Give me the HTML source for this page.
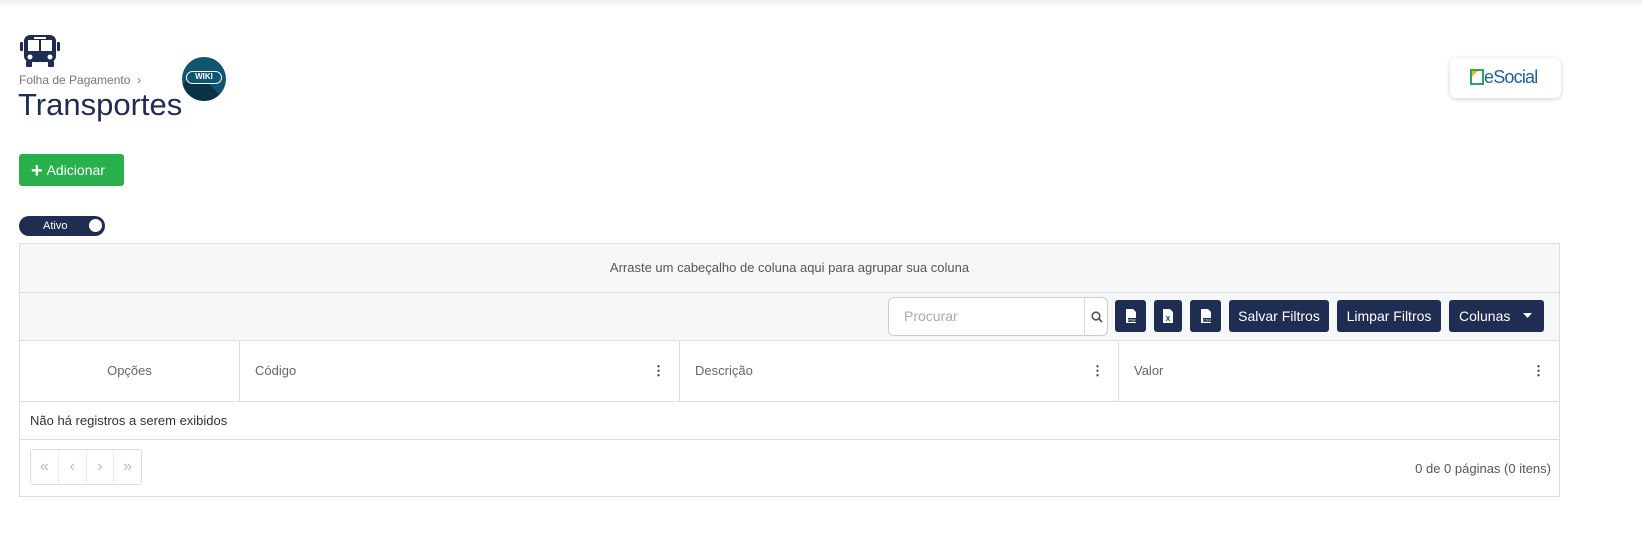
<!DOCTYPE html>
<html><head><style>
*{box-sizing:border-box;margin:0;padding:0}
body{width:1642px;height:537px;background:#fff;font-family:"Liberation Sans",sans-serif;position:relative;overflow:hidden;color:#333}
.abs{position:absolute}
.btn{position:absolute;background:#1f2d52;border-radius:3px;color:#fff;font-size:14px;display:flex;align-items:center;justify-content:center}
</style></head><body>
<div class="abs" style="left:0;top:0;width:1642px;height:8px;background:linear-gradient(#eee,#fff)"></div>
<svg class="abs" style="left:20px;top:34px" width="40" height="34" viewBox="0 0 40 34">
<rect x="4" y="1" width="32" height="27" rx="6" fill="#1f2d52"/>
<rect x="0" y="8" width="3" height="9" rx="1" fill="#1f2d52"/><rect x="37" y="8" width="3" height="9" rx="1" fill="#1f2d52"/>
<rect x="8" y="6" width="11" height="11" fill="#fff"/><rect x="21" y="6" width="11" height="11" fill="#fff"/>
<rect x="14" y="3" width="12" height="2" fill="#fff"/>
<circle cx="10" cy="23" r="2.5" fill="#fff"/><circle cx="30" cy="23" r="2.5" fill="#fff"/>
<rect x="6" y="27" width="6" height="6" rx="1" fill="#1f2d52"/><rect x="28" y="27" width="6" height="6" rx="1" fill="#1f2d52"/>
</svg>
<div class="abs" style="left:19px;top:73px;font-size:12px;color:#777">Folha de Pagamento&nbsp;&nbsp;›</div>
<div class="abs" style="left:18px;top:87px;font-size:31px;color:#1f2d52">Transportes</div>
<div class="abs" style="left:182px;top:57px;width:44px;height:44px;border-radius:50%;background:#0f5570;overflow:hidden">
<div style="position:absolute;left:14px;top:14px;width:60px;height:60px;background:#0b3346;transform:rotate(45deg);transform-origin:0 0"></div>
<div style="position:absolute;left:4px;top:14px;width:36px;height:13px;border:1.5px solid #fff;border-radius:7px;color:#fff;font-size:8px;font-weight:bold;text-align:center;line-height:10px;background:#0f5570">WIKI</div></div>
<div class="abs" style="left:1450px;top:58px;width:111px;height:40px;border-radius:6px;box-shadow:0 1px 5px rgba(0,0,0,.2);background:#fff;font-size:18px;color:#1f5fa0;padding:9px 0 0 20px">
<span style="display:inline-block;width:14px;height:16px;border:2px solid #2aa55a;vertical-align:-2px;background:linear-gradient(135deg,#f6b800 25%,#fff 25%)"></span><span style="letter-spacing:-0.8px">eSocial</span></div>
<div class="abs" style="left:19px;top:154px;width:105px;height:32px;background:#28b04b;border-radius:3px;color:#fff;font-size:14px;line-height:32px;padding-left:12px"><b style="font-size:20px;vertical-align:-2px">+</b>&nbsp;Adicionar</div>
<div class="abs" style="left:19px;top:216px;width:86px;height:20px;background:#1f2d52;border-radius:10px;color:#fff;font-size:11px;line-height:20px;padding-left:24px">Ativo<span style="position:absolute;right:3px;top:3px;width:13px;height:13px;border-radius:50%;background:#fff"></span></div>
<div class="abs" style="left:19px;top:243px;width:1541px;height:254px;border:1px solid #ddd">
<div style="height:49px;background:#f6f7f9;border-bottom:1px solid #ddd;text-align:center;line-height:48px;font-size:13px;color:#555">Arraste um cabeçalho de coluna aqui para agrupar sua coluna</div>
<div style="height:48px;background:#f6f7f9;border-bottom:1px solid #ddd;position:relative"></div>
<div style="height:61px;border-bottom:1px solid #ddd;display:flex;font-size:13px;color:#666">
<div style="width:220px;border-right:1px solid #ddd;text-align:center;line-height:60px">Opções</div>
<div style="width:440px;border-right:1px solid #ddd;line-height:60px;padding-left:15px;position:relative">Código<b style="position:absolute;right:14px;color:#333">⋮</b></div>
<div style="width:439px;border-right:1px solid #ddd;line-height:60px;padding-left:15px;position:relative">Descrição<b style="position:absolute;right:14px;color:#333">⋮</b></div>
<div style="flex:1;line-height:60px;padding-left:15px;position:relative">Valor<b style="position:absolute;right:14px;color:#333">⋮</b></div>
</div>
<div style="height:38px;border-bottom:1px solid #ddd;line-height:38px;padding-left:10px;font-size:13px;color:#333">Não há registros a serem exibidos</div>
<div style="position:absolute;left:10px;top:205px;width:112px;height:36px;border:1px solid #ddd;border-radius:3px;display:flex;color:#bbb;font-size:16px">
<span style="flex:1;text-align:center;line-height:34px;border-right:1px solid #eee">«</span><span style="flex:1;text-align:center;line-height:34px;border-right:1px solid #eee">‹</span><span style="flex:1;text-align:center;line-height:34px;border-right:1px solid #eee">›</span><span style="flex:1;text-align:center;line-height:34px">»</span></div>
<div style="position:absolute;right:8px;top:217px;font-size:13px;color:#555">0 de 0 páginas (0 itens)</div>
</div>
<div class="abs" style="left:888px;top:297px;width:220px;height:39px;border:1px solid #ccc;border-radius:6px;background:#fff;font-size:14px;color:#aaa;line-height:37px;padding-left:15px">Procurar<span style="position:absolute;left:195px;top:0;height:37px;border-left:1px solid #ddd;width:24px"><svg style="position:absolute;left:6px;top:13px" width="12" height="12" viewBox="0 0 12 12"><circle cx="5" cy="5" r="3.8" fill="none" stroke="#555" stroke-width="1.6"/><path d="M8 8l3 3" stroke="#555" stroke-width="1.8"/></svg></span></div>
<div class="btn" style="left:1115px;top:300px;width:31px;height:32px"><svg width="12" height="16" viewBox="0 0 12 16"><path d="M1 1h7l3 3v11H1z" fill="#fff"/><rect x="3" y="10" width="8" height="4" fill="#1f2d52"/><text x="7" y="13.5" font-size="4" fill="#fff" text-anchor="middle" font-family="Liberation Sans">PDF</text></svg></div>
<div class="btn" style="left:1154px;top:300px;width:28px;height:32px"><svg width="12" height="16" viewBox="0 0 12 16"><path d="M1 1h7l3 3v11H1z" fill="#fff"/><text x="6" y="13" font-size="7" font-weight="bold" fill="#1f2d52" text-anchor="middle" font-family="Liberation Sans">X</text></svg></div>
<div class="btn" style="left:1190px;top:300px;width:31px;height:32px"><svg width="12" height="16" viewBox="0 0 12 16"><path d="M1 1h7l3 3v11H1z" fill="#fff"/><rect x="3" y="10" width="8" height="4" fill="#1f2d52"/><text x="7" y="13.5" font-size="4" fill="#fff" text-anchor="middle" font-family="Liberation Sans">CSV</text></svg></div>
<div class="btn" style="left:1229px;top:300px;width:100px;height:32px">Salvar Filtros</div>
<div class="btn" style="left:1337px;top:300px;width:104px;height:32px">Limpar Filtros</div>
<div class="btn" style="left:1449px;top:300px;width:95px;height:32px;justify-content:flex-start;padding-left:10px">Colunas<svg style="position:absolute;right:12px;top:13px" width="9" height="6" viewBox="0 0 9 6"><path d="M0 0h9L4.5 5z" fill="#fff"/></svg></div>
</body></html>
